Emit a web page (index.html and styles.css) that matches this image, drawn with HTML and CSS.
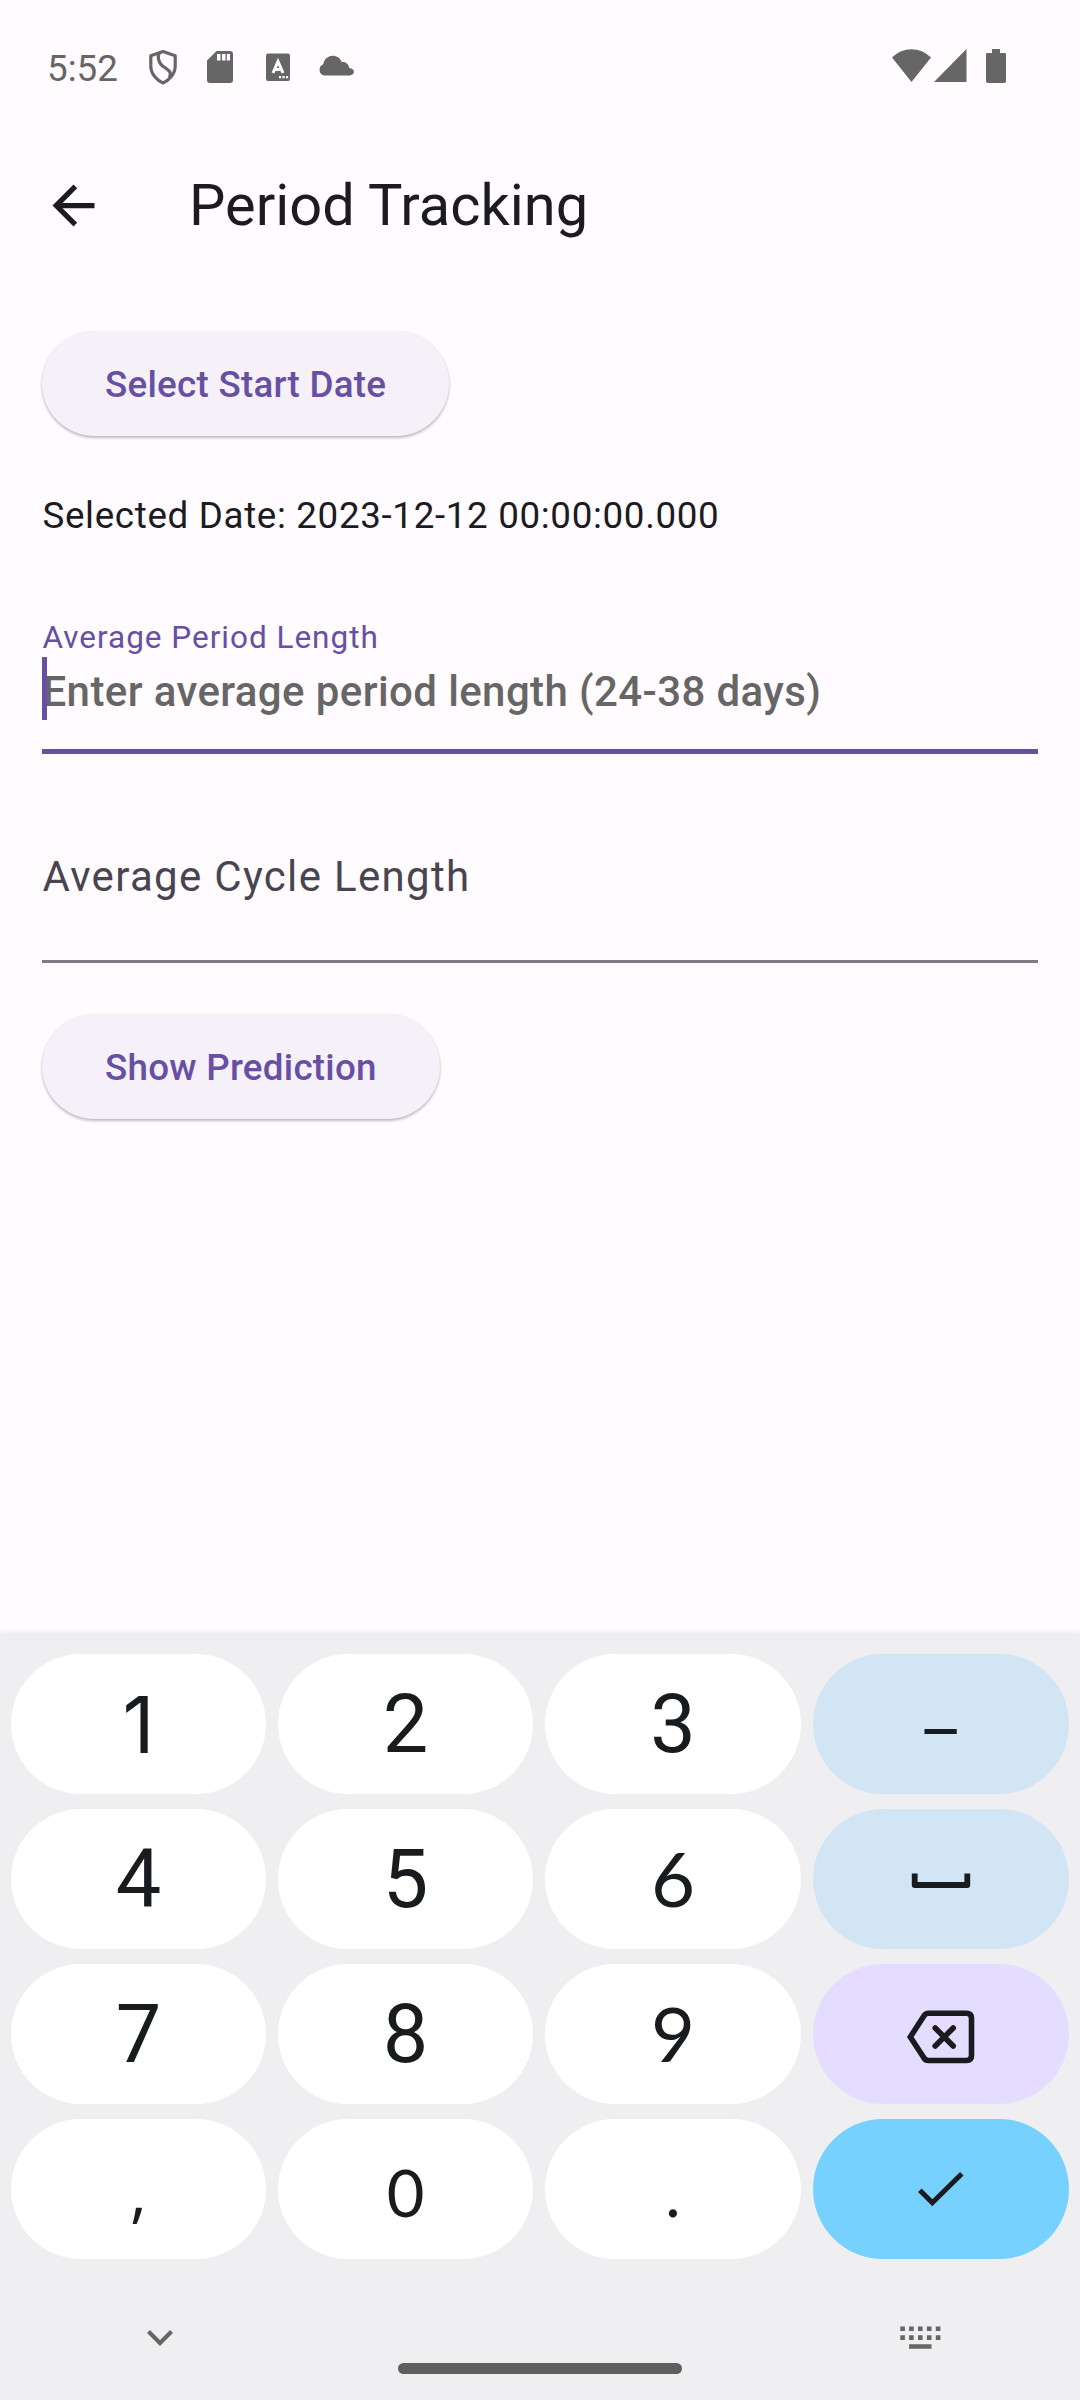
FILE: index.html
```html
<!DOCTYPE html>
<html lang="en">
<head>
<meta charset="utf-8">
<title>Period Tracking</title>
<link rel="stylesheet" href="styles.css">
</head>
<body>
<div class="status-bar">
  <div class="status-left">
    <span class="clock">5:52</span>
    <svg class="ic-shield" width="30" height="36" viewBox="0 0 30 36" fill="none" stroke="#666" stroke-width="3.2" stroke-linejoin="round"><path d="M15 2.6 27.2 6.8V17C27.2 25 21 31.6 15 33.9 9 31.6 2.8 25 2.8 17V6.8Z"/><path d="M11 4.500C9.500 9 10.500 13 14 16.500C19 20.500 24.500 22 21.500 28.500"/></svg>
    <svg class="ic-sd" width="26" height="36" viewBox="0 0 26 36"><path fill="#666" fill-rule="evenodd" d="M9.500 2H23Q26 2 26 5V31Q26 34 23 34H3Q0 34 0 31V11.500ZM10 5V11.500H13.500V5ZM15 5V11.500H18.500V5ZM19.800 5V11.500H23V5Z"/></svg>
    <svg class="ic-a" width="24" height="36" viewBox="0 0 24 36"><rect y="4.500" width="24" height="27.500" rx="2" fill="#666"/><path d="M7 24 12 12.500 17 24M8.500 20.500H15.500" fill="none" stroke="#fffbff" stroke-width="3"/><path fill="#fffbff" d="M13 27h2.200v2.200H13zM16.500 27h2.200v2.200h-2.200zM20 27h2.200v2.200H20z"/></svg>
    <svg class="ic-cloud" width="36" height="36" viewBox="0 0 36 36"><path fill="#666" d="M6 26.500A6 6 0 0 1 5.200 15.200C7.200 4.800 20.500 4 23.700 13.200C27.600 12.400 30.800 15.200 31.200 19C37.600 19.200 37.300 26.500 31.500 26.500Z"/></svg>
  </div>
  <div class="status-right">
    <svg width="39" height="36" viewBox="0 0 39 36"><path fill="#666" d="M0 8.500C11-2.600 28-2.600 39 8.500L19.500 33Z"/></svg>
    <svg class="ic-signal" width="33" height="36" viewBox="0 0 33 36"><path fill="#666" d="M32.500 0V33H0Z"/></svg>
    <svg class="ic-battery" width="20" height="36" viewBox="0 0 20 36"><path fill="#666" d="M6 0H14V4H19Q20 4 20 5V32Q20 34 18 34H2Q0 34 0 32V5Q0 4 1 4H6Z"/></svg>
  </div>
</div>

<header class="app-bar">
  <svg width="63" height="63" viewBox="0 0 24 24"><path fill="#1c1b1f" d="M20 11H7.830l5.590-5.590L12 4l-8 8 8 8 1.410-1.410L7.830 13H20v-2z"/></svg>
  <h1 class="title">Period Tracking</h1>
</header>

<main class="form">
  <button class="btn">Select Start Date</button>
  <p class="selected">Selected Date: 2023-12-12 00:00:00.000</p>
  <div class="field field-active">
    <div class="field-label">Average Period Length</div>
    <div class="field-hint">Enter average period length (24-38 days)</div>
    <div class="cursor"></div>
  </div>
  <div class="field field-idle">Average Cycle Length</div>
  <button class="btn">Show Prediction</button>
</main>

<section class="keyboard">
  <div class="keys">
    <div class="key key-one">1</div>
    <div class="key">2</div>
    <div class="key">3</div>
    <div class="key key-blue key-dash">–</div>
    <div class="key">4</div>
    <div class="key">5</div>
    <div class="key key-open">6</div>
    <div class="key key-blue"><svg width="60" height="140" viewBox="0 0 60 140"><path d="M3.700 64.500V76H56.300V64.500" fill="none" stroke="#191c1e" stroke-width="5.800" stroke-linejoin="round"/></svg></div>
    <div class="key">7</div>
    <div class="key">8</div>
    <div class="key key-open">9</div>
    <div class="key key-violet"><svg width="70" height="140" viewBox="0 0 70 140" fill="none" stroke="#1b1b1f" stroke-width="5.600" stroke-linejoin="round" stroke-linecap="round"><path stroke-linejoin="miter" d="M22.500 49.300H60.500Q65.500 49.300 65.500 54.300V91.500Q65.500 96.500 60.500 96.500H22.500Q19.500 96.500 18 94L4.300 73 18 51.800Q19.500 49.300 22.500 49.300Z"/><path d="M29.200 64 47.200 82M47.200 64 29.200 82"/></svg></div>
    <div class="key key-comma">,</div>
    <div class="key key-zero">0</div>
    <div class="key key-period">.</div>
    <div class="key key-enter"><svg width="48" height="140" viewBox="0 0 48 140"><path d="M2.800 71.300 15.300 83.800 44.800 54.800" fill="none" stroke="#1b1b1f" stroke-width="5"/></svg></div>
  </div>
  <div class="nav">
    <svg class="ic-down" width="26" height="20" viewBox="0 0 26 20"><path d="M1.500 2.600 13 14.100 24.500 2.600" fill="none" stroke="#666" stroke-width="4.200"/></svg>
    <div class="home"></div>
    <svg class="ic-kbd" width="41" height="24" viewBox="0 0 41 24"><path fill="#666" d="M.3 .4h4.600v4.700H.3zM9.100 .4h4.600v4.700H9.100zM18 .4h4.600v4.700H18zM26.900 .4h4.600v4.700h-4.600zM35.800 .4h4.600v4.700h-4.600zM.3 9.300h4.600V14H.3zM9.100 9.300h4.600V14H9.100zM18 9.300h4.600V14H18zM26.900 9.300h4.600V14h-4.600zM35.800 9.300h4.600V14h-4.600zM9.100 18.200h22.400v4.600H9.100z"/></svg>
  </div>
</section>
</body>
</html>
```
FILE: styles.css
```css
* { box-sizing: border-box; }

body {
  margin: 0;
  width: 1080px;
  height: 2400px;
  display: flex;
  flex-direction: column;
  background: #fffbff;
  color: #1c1b1f;
  font-family: Roboto, sans-serif;
  overflow: hidden;
}

svg { display: block; flex: none; }

.status-bar {
  height: 132px;
  padding: 49px 74px 0 47px;
  display: flex;
  justify-content: space-between;
}
.status-left, .status-right { display: flex; height: 36px; }
.clock {
  width: 100px;
  font-size: 36.75px;
  line-height: 39px;
  color: #666;
}
.ic-shield { margin-left: 1px; }
.ic-sd { margin-left: 29px; }
.ic-a { margin-left: 33px; }
.ic-cloud { margin-left: 28px; }
.ic-signal { margin-left: 3px; }
.ic-battery { margin-left: 19px; }

.app-bar {
  height: 147px;
  padding-left: 42px;
  display: flex;
  align-items: center;
  gap: 84px;
}
.title {
  margin: 0;
  font-size: 57.75px;
  font-weight: 400;
  line-height: 73px;
}

.form {
  padding: 52px 42px 0;
  display: flex;
  flex-direction: column;
  align-items: flex-start;
}
.btn {
  height: 105px;
  padding: 2px 63px 0;
  border: 0;
  border-radius: 53px;
  background: #f6f1f9;
  box-shadow: 0 2px 3px rgba(0, 0, 0, 0.25), 0 0 2px rgba(0, 0, 0, 0.06);
  color: #6750a4;
  font: 500 36.75px/103px Roboto, sans-serif;
  letter-spacing: 0.2625px;
}
.selected {
  margin: 54px 0 75px;
  font-size: 36.75px;
  line-height: 52px;
  letter-spacing: 0.656px;
  text-indent: 0.5px;
}
.field { width: 100%; position: relative; text-indent: 0.5px; }
.field-active {
  padding-bottom: 24px;
  border-bottom: 5px solid #6750a4;
}
.field-label {
  font-size: 31.5px;
  line-height: 42px;
  letter-spacing: 0.984px;
  color: #6750a4;
}
.field-hint {
  font-size: 42px;
  font-weight: 500;
  line-height: 66px;
  letter-spacing: 0.394px;
  color: #666;
}
.cursor {
  position: absolute;
  left: 0;
  top: 40px;
  width: 5px;
  height: 63px;
  background: #6750a4;
}
.field-idle {
  margin: 93px 0 51px;
  padding-bottom: 53px;
  border-bottom: 3px solid #7f7983;
  font-size: 42px;
  line-height: 60px;
  letter-spacing: 1.3125px;
  color: #49454f;
}

.keyboard {
  margin-top: auto;
  height: 767px;
  padding: 21px 11px 0;
  background: #efeff1;
  box-shadow: 0 -1px 5px rgba(60, 30, 60, 0.08);
}
.keys {
  display: grid;
  grid-template-columns: 255px 255px 256px 256px;
  grid-auto-rows: 140px;
  gap: 15px 12px;
}
.key {
  display: flex;
  justify-content: center;
  border-radius: 70px;
  background: #fff;
  color: #191c1e;
  font-size: 81px;
  line-height: 142px;
}
.key-blue { background: #d2e5f4; }
.key-violet { background: #e4ddff; }
.key-enter { background: #76d1ff; }
.key-one { font: 79px/140px Inter, sans-serif; }
.key-dash { font-size: 66px; line-height: 157px; }
.key-open { font: 76px/138px Lato, sans-serif; }
.key-comma { font: 65px/143px "Open Sans", sans-serif; }
.key-zero { font: 65px/147px Lato, sans-serif; }
.key-period { font: 65px/147px Lato, sans-serif; }

.nav {
  height: 141px;
  display: flex;
  justify-content: space-between;
  padding: 0 128px 0 136px;
}
.ic-down { margin-top: 70px; }
.ic-kbd { margin-top: 67px; }
.home {
  width: 284px;
  height: 11px;
  margin: 104px 0 0 7px;
  border-radius: 5.500px;
  background: #5f5f5f;
}
```
